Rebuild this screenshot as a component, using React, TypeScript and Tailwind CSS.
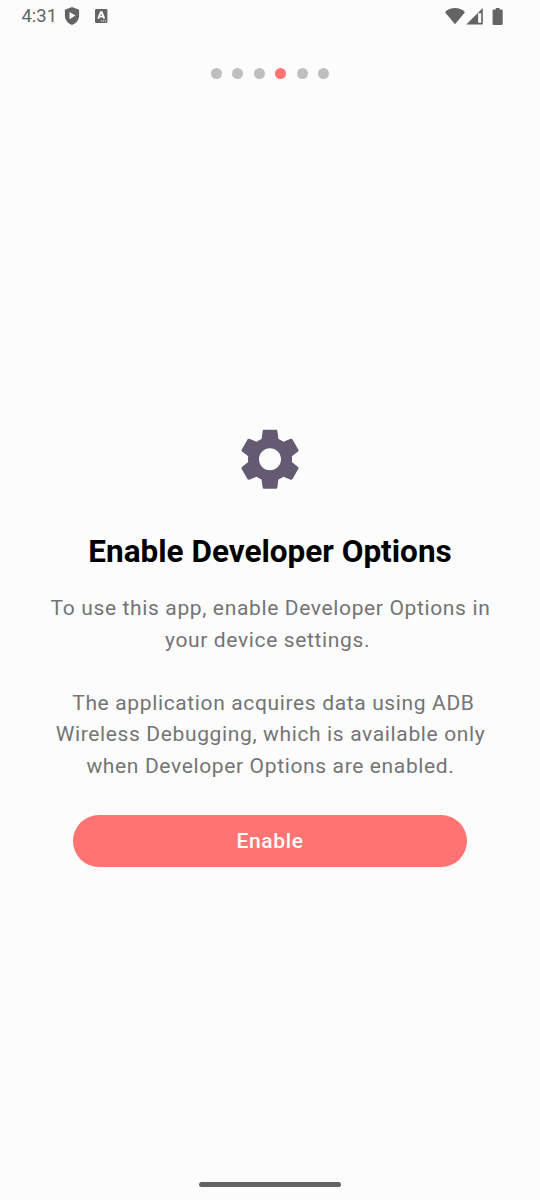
import React from "react";

const DOTS = [0, 1, 2, 3, 4, 5];
const ACTIVE_DOT = 3;

function StatusBar() {
  return (
    <header className="flex h-8 w-full items-center justify-between pl-[21.5px] pr-[36.5px] text-[#646464]">
      <div className="flex items-center">
        <span className="w-[43px] whitespace-nowrap text-[18.4px] leading-8">4:31</span>
        <svg className="-ml-[0.5px] h-[18px] w-[16px]" viewBox="-.5 0 16 18" fill="currentColor">
          <path
            fillRule="evenodd"
            d="M7.5 0 14.6 2.7V8.3C14.6 12.8 11.7 16.7 7.5 18 3.3 16.7.4 12.8.4 8.3V2.7ZM5 5V12.2L11 8.6Z"
          />
        </svg>
        <svg className="ml-[14.5px] h-[14px] w-[13px]" viewBox="0 0 13 14">
          <rect width="12.4" height="14" rx="1.2" fill="currentColor" />
          <path d="M3.2 9.7 5.8 3.2H6.7L9.3 9.7M4.3 7.6H8.2" fill="none" stroke="#fcfcfc" strokeWidth="1.9" />
          <path d="M6 12H11.5" stroke="#fcfcfc" strokeWidth="1" strokeDasharray="1.2 .7" />
        </svg>
      </div>
      <div className="flex items-center">
        <svg className="h-[17px] w-[20px]" viewBox="0 0 20 17" fill="currentColor">
          <path d="M10 16.2 0 4.2C2.8 1.4 6.2 0 10 0S17.2 1.4 20 4.2Z" />
        </svg>
        <svg className="ml-[1px] h-[17px] w-[17px]" viewBox="0 0 17 17" fill="currentColor">
          <path fillRule="evenodd" d="M16.8 0V16.4H.3ZM12.1 5.2V14.8H15.2V5.2Z" />
        </svg>
        <svg className="ml-[8.5px] mr-[1px] h-[17px] w-[11px]" viewBox="-.4 0 11 17" fill="currentColor">
          <path d="M3.4 0H7.2V1.6H9.2Q10.3 1.6 10.3 2.7V15.9Q10.3 17 9.2 17H1.3Q.2 17 .2 15.9V2.7Q.2 1.6 1.3 1.6H3.4Z" />
        </svg>
      </div>
    </header>
  );
}

function SettingsIcon() {
  return (
    <svg className="h-[74px] w-[74px]" viewBox="-.08 -.16 24.16 24.16" fill="#645b73">
      <path d="M19.14 12.94c.04-.3.06-.61.06-.94 0-.32-.02-.64-.07-.94l2.03-1.58c.18-.14.23-.41.12-.61l-1.92-3.32c-.12-.22-.37-.29-.59-.22l-2.39.96c-.5-.38-1.03-.7-1.62-.94l-.36-2.54c-.04-.24-.24-.41-.48-.41h-3.84c-.24 0-.43.17-.47.41l-.36 2.54c-.59.24-1.13.57-1.62.94l-2.39-.96c-.22-.08-.47 0-.59.22L2.74 8.87c-.12.21-.08.47.12.61l2.03 1.58c-.05.3-.09.63-.09.94s.02.64.07.94l-2.03 1.58c-.18.14-.23.41-.12.61l1.92 3.32c.12.22.37.29.59.22l2.39-.96c.5.38 1.03.7 1.62.94l.36 2.54c.05.24.24.41.48.41h3.84c.24 0 .44-.17.47-.41l.36-2.54c.59-.24 1.13-.56 1.62-.94l2.39.96c.22.08.47 0 .59-.22l1.92-3.32c.12-.22.07-.47-.12-.61zM12 15.6c-1.98 0-3.6-1.62-3.6-3.6s1.62-3.6 3.6-3.6 3.6 1.62 3.6 3.6-1.62 3.6-3.6 3.6" />
    </svg>
  );
}

export default function App() {
  return (
    <div className="flex h-[1200px] w-[540px] flex-col items-center bg-[#fcfcfc] font-['Roboto',sans-serif]">
      <StatusBar />
      <nav className="mt-[36px] flex gap-[10.5px]">
        {DOTS.map((dot) => (
          <span
            key={dot}
            className={
              dot === ACTIVE_DOT
                ? "h-[11px] w-[11px] rounded-full bg-[#ff7373]"
                : "h-[11px] w-[11px] rounded-full bg-[#bfbfbf]"
            }
          />
        ))}
      </nav>
      <main className="mt-[343px] flex w-full flex-col items-center">
        <SettingsIcon />
        <h1 className="mt-[35px] text-[31.5px] font-bold leading-[42px] text-black">Enable Developer Options</h1>
        <p className="ml-[1px] mt-[20px] whitespace-nowrap text-center text-[21px] leading-[31.5px] tracking-[0.64px] text-[#747474]">
          To use this app, enable Developer Options in
          <br />
          your device settings.&nbsp;
          <br />
          <br />
          &nbsp;The application acquires data using ADB
          <br />
          Wireless Debugging, which is available only
          <br />
          when Developer Options are enabled.
        </p>
        <button className="mt-[33px] h-[52px] w-[394px] rounded-full bg-[#ff7373] pt-px text-[21px] font-medium leading-[31.5px] tracking-[0.656px] text-white">
          Enable
        </button>
      </main>
      <div className="mb-[13px] mt-auto h-[5px] w-[142px] rounded-full bg-[#646464]" />
    </div>
  );
}
